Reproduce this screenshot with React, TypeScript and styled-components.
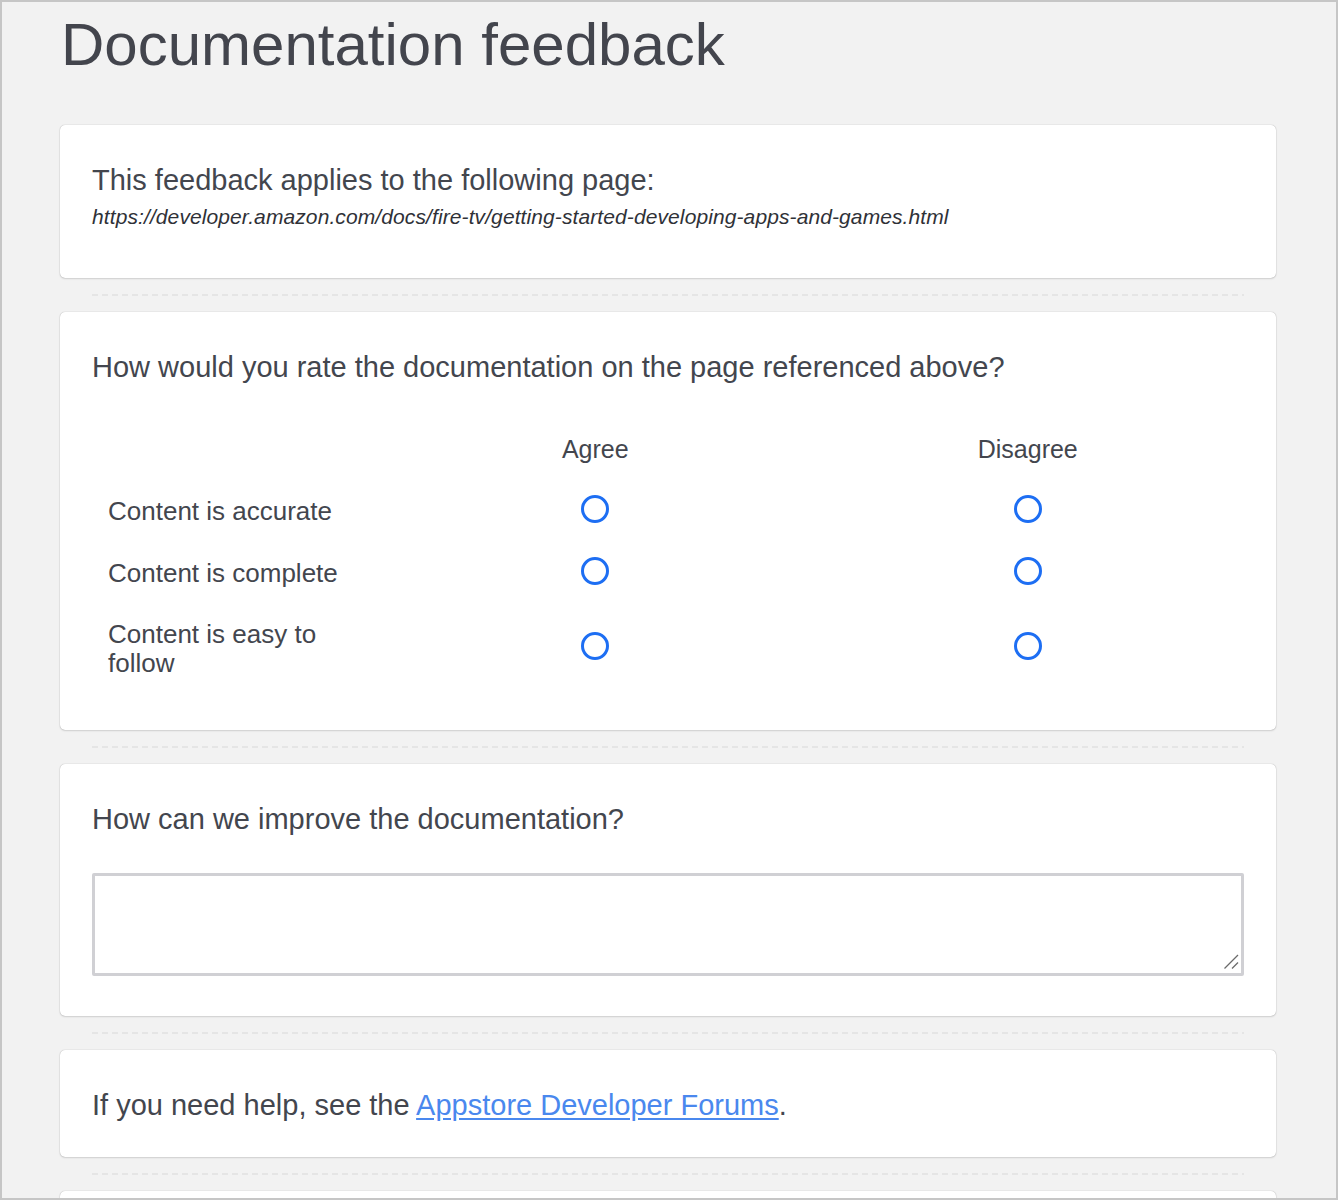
import React from "react";
import styled, { createGlobalStyle } from "styled-components";

const Global = createGlobalStyle`
  html, body { margin: 0; padding: 0; }
  body { font-family: "Liberation Sans", Arial, Helvetica, sans-serif; color: #43464e; }
  * { box-sizing: border-box; }
`;

const Frame = styled.div`
  width: 1338px;
  height: 1200px;
  overflow: hidden;
  border: 2px solid #c6c6c6;
  background: #f2f2f2;
  padding: 0 60px 0 58px;
`;

const Title = styled.h1`
  margin: 10px 0 47px 1px;
  font-size: 60px;
  line-height: 66px;
  font-weight: 400;
  color: #43454d;
`;

const Card = styled.section`
  background: #fff;
  border-radius: 5px;
  box-shadow: 0 0 1px rgba(0, 0, 0, 0.35), 0 1px 2px rgba(0, 0, 0, 0.12);
  padding: 38px 32px 34px;
`;

const Separator = styled.div`
  height: 34px;
  display: flex;
  align-items: center;
  padding: 0 32px;
  &::before {
    content: "";
    display: block;
    flex: 1;
    height: 2px;
    background: repeating-linear-gradient(to right, #e5e5e5 0 6px, transparent 6px 10px);
  }
`;

const Heading = styled.h2`
  margin: 0;
  font-size: 29px;
  line-height: 34px;
  font-weight: 400;
  color: #43464e;
`;

const Url = styled.p`
  margin: 8px 0 15px;
  font-size: 21px;
  line-height: 24px;
  letter-spacing: 0.1px;
  font-style: italic;
  color: #2f3137;
`;

const Table = styled.div`
  margin: 34px 0 2px;
  display: grid;
  grid-template-columns: 287px 1fr 1fr;
  grid-auto-rows: minmax(62px, auto);
`;

const HeadCell = styled.div`
  display: flex;
  align-items: center;
  justify-content: center;
  font-size: 25px;
  line-height: 30px;
`;

const LabelCell = styled.div`
  display: flex;
  align-items: center;
  padding: 16px 16px;
  font-size: 26px;
  line-height: 29px;
  color: #43464e;
`;

const RadioCell = styled.div<{ $lift: number }>`
  display: flex;
  align-items: center;
  justify-content: center;
  padding-bottom: ${(p) => p.$lift}px;
`;

const Radio = styled.input.attrs({ type: "radio" })`
  appearance: none;
  -webkit-appearance: none;
  margin: 0;
  width: 28px;
  height: 28px;
  border-radius: 50%;
  border: 3px solid #1d6ef3;
  background: #fff;
  cursor: pointer;
  &:checked {
    background: radial-gradient(circle, #1d6ef3 0 6px, #fff 6.5px);
  }
`;

const AreaWrap = styled.div`
  position: relative;
  margin: 37px 0 6px;
`;

const TextArea = styled.textarea`
  display: block;
  width: 100%;
  height: 103px;
  border: 3px solid #d0d0d4;
  border-radius: 2px;
  font-family: inherit;
  font-size: 20px;
  resize: none;
  outline: none;
`;

const Grip = styled.svg`
  position: absolute;
  right: 5px;
  bottom: 6px;
  width: 16px;
  height: 16px;
  pointer-events: none;
`;

const HelpText = styled.p`
  margin: 0 0 1px;
  font-size: 29px;
  line-height: 34px;
  color: #43464e;
`;

const Link = styled.a`
  color: #4a88ee;
  text-decoration: underline;
  text-underline-offset: 3px;
`;

const rows = [
  { label: "Content is accurate", name: "accurate", lift: 4 },
  { label: "Content is complete", name: "complete", lift: 4 },
  { label: "Content is easy to follow", name: "easy", lift: 7 },
];

export default function App() {
  return (
    <>
      <Global />
      <Frame>
        <Title>Documentation feedback</Title>
        <Card>
          <Heading>This feedback applies to the following page:</Heading>
          <Url>https://developer.amazon.com/docs/fire-tv/getting-started-developing-apps-and-games.html</Url>
        </Card>
        <Separator />
        <Card>
          <Heading>How would you rate the documentation on the page referenced above?</Heading>
          <Table>
            <div />
            <HeadCell>Agree</HeadCell>
            <HeadCell>Disagree</HeadCell>
            {rows.map((r) => (
              <React.Fragment key={r.name}>
                <LabelCell>{r.label}</LabelCell>
                <RadioCell $lift={r.lift}>
                  <Radio name={r.name} aria-label={`${r.label}: Agree`} />
                </RadioCell>
                <RadioCell $lift={r.lift}>
                  <Radio name={r.name} aria-label={`${r.label}: Disagree`} />
                </RadioCell>
              </React.Fragment>
            ))}
          </Table>
        </Card>
        <Separator />
        <Card>
          <Heading>How can we improve the documentation?</Heading>
          <AreaWrap>
            <TextArea aria-label="How can we improve the documentation?" />
            <Grip viewBox="0 0 16 16">
              <line x1="1.5" y1="14.5" x2="15" y2="1" stroke="#6a6a6a" strokeWidth="1.2" />
              <line x1="9" y1="14.5" x2="15" y2="8.5" stroke="#6a6a6a" strokeWidth="1.2" />
            </Grip>
          </AreaWrap>
        </Card>
        <Separator />
        <Card>
          <HelpText>
            If you need help, see the <Link href="#">Appstore Developer Forums</Link>.
          </HelpText>
        </Card>
        <Separator />
        <Card>
          <Heading>&nbsp;</Heading>
        </Card>
      </Frame>
    </>
  );
}
